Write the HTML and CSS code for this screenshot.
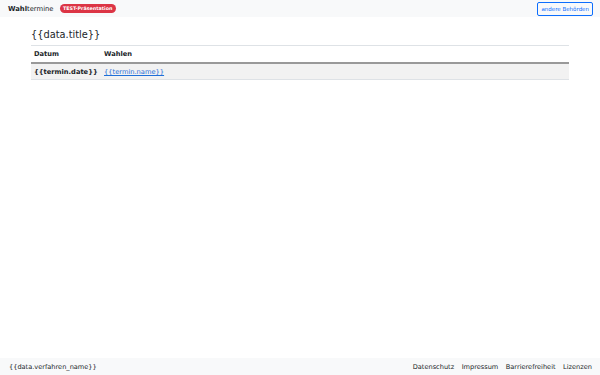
FILE: index.html
```html
<!DOCTYPE html>
<html lang="de">
<head>
<meta charset="utf-8">
<title>Wahltermine</title>
<link rel="stylesheet" href="styles.css">
</head>
<body>
<div class="page">
  <header class="topbar">
    <div class="brand-group">
      <span class="brand"><b>Wahl</b>termine</span>
      <span class="badge">TEST-Präsentation</span>
    </div>
    <a class="btn" href="#">andere Behörden</a>
  </header>
  <main class="content">
    <h1 class="title">{{data.title}}</h1>
    <table class="table">
      <thead>
        <tr><th class="col-date">Datum</th><th>Wahlen</th></tr>
      </thead>
      <tbody>
        <tr><td class="col-date strong">{{termin.date}}</td><td><a href="#">{{termin.name}}</a></td></tr>
      </tbody>
    </table>
  </main>
  <footer class="footer">
    <span>{{data.verfahren_name}}</span>
    <nav class="footer-links">
      <a href="#">Datenschutz</a>
      <a href="#">Impressum</a>
      <a href="#">Barrierefreiheit</a>
      <a href="#">Lizenzen</a>
    </nav>
  </footer>
</div>
</body>
</html>
```
FILE: styles.css
```css
html, body {
  margin: 0;
  padding: 0;
  height: 100%;
}
body {
  font-family: "DejaVu Sans", sans-serif;
  color: #212529;
  background: #fff;
}
.page {
  display: flex;
  flex-direction: column;
  height: 100%;
}
.topbar {
  display: flex;
  justify-content: space-between;
  align-items: center;
  height: 17px;
  padding: 0 7px 0 8px;
  background: #f8f9fa;
}
.brand-group {
  display: flex;
  align-items: center;
  gap: 6px;
}
.brand {
  font-size: 6.8px;
  color: #212529;
}
.brand b {
  font-weight: bold;
}
.badge {
  background: #dc3545;
  color: #fff;
  font-size: 4.8px;
  font-weight: bold;
  padding: 2px 3.5px;
  border-radius: 5px;
  line-height: 5px;
}
.btn {
  font-size: 5.5px;
  color: #0d6efd;
  border: 1px solid #0d6efd;
  border-radius: 2px;
  padding: 3px 3px;
  line-height: 6px;
  text-decoration: none;
}
.content {
  flex: 1;
  padding: 12px 31px 0 31px;
}
.title {
  font-size: 9.8px;
  font-weight: normal;
  margin: 0 0 4px 0;
  line-height: 12px;
}
.table {
  width: 100%;
  border-collapse: collapse;
  font-size: 6.7px;
}
.table th, .table td {
  text-align: left;
  padding: 4px 3px;
  line-height: 8px;
}
.table tbody td {
  padding: 4px 3px 3px 3px;
}
.table thead th {
  border-top: 1px solid #dee2e6;
  border-bottom: 2px solid #999;
  font-weight: bold;
}
.table tbody td {
  background: #f2f2f2;
  border-bottom: 1px solid #dee2e6;
}
.table .col-date {
  width: 64px;
}
.strong {
  font-weight: bold;
}
.table a {
  color: #1f6fd8;
}
.footer {
  display: flex;
  justify-content: space-between;
  align-items: center;
  height: 17px;
  padding: 0 8px 0 9px;
  background: #f8f9fa;
  font-size: 6.6px;
}
.footer-links {
  display: flex;
  gap: 7.5px;
}
.footer-links a {
  color: #212529;
  text-decoration: none;
}
```
